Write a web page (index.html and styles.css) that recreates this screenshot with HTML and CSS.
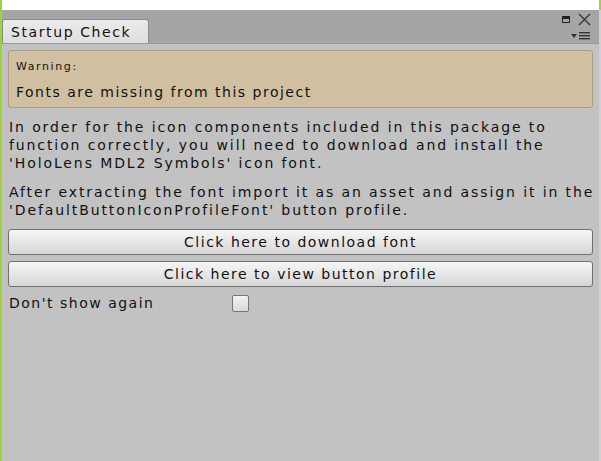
FILE: index.html
```html
<!DOCTYPE html>
<html>

<head>
    <link rel="stylesheet" href="styles.css">
</head>

<body>
    <div class="topstrip"></div>
    <div class="window">
        <div class="tabbar">
            <div class="tab">Startup Check</div>
            <div class="controls">
                <div class="ctl-row">
                    <svg width="9" height="8" viewBox="0 0 9 8">
                        <rect x="0.5" y="0.5" width="7" height="6" fill="none" stroke="#222" />
                        <rect x="1" y="1" width="6" height="2" fill="#222" />
                    </svg>
                    <svg width="13" height="13" viewBox="0 0 13 13">
                        <path d="M1 1 L12 12 M12 1 L1 12" stroke="#333" stroke-width="1.3" fill="none" />
                    </svg>
                </div>
                <div class="ctl-menu">
                    <svg width="20" height="8" viewBox="0 0 20 8">
                        <path d="M0 2 L6 2 L3 6 Z" fill="#333" />
                        <rect x="8" y="0" width="11" height="1.4" fill="#333" />
                        <rect x="8" y="3" width="11" height="1.4" fill="#333" />
                        <rect x="8" y="6" width="11" height="1.4" fill="#333" />
                    </svg>
                </div>
            </div>
        </div>

        <div class="content">
            <div class="helpbox">
                <div class="help-title">Warning:</div>
                <div class="help-text">Fonts are missing from this project</div>
            </div>

            <p>In order for the icon components included in this package to<br>
                function correctly, you will need to download and install the<br>
                'HoloLens MDL2 Symbols' icon font.</p>
            <p>After extracting the font import it as an asset and assign it in the<br>
                'DefaultButtonIconProfileFont' button profile.</p>

            <div class="btn first">Click here to download font</div>
            <div class="btn">Click here to view button profile</div>

            <div class="toggle">
                <span class="toggle-label">Don't show again</span>
                <span class="checkbox"></span>
            </div>
        </div>
    </div>
</body>

</html>
```

FILE: styles.css
```css
html,
body {
    margin: 0;
    height: 100%;
}

body {
    font-family: "DejaVu Sans", sans-serif;
    color: #111;
    background: #c2c2c2;
    border-left: 2px solid #9fd33a;
    box-sizing: border-box;
    display: flex;
    flex-direction: column;
    overflow: hidden;
}

.topstrip {
    height: 10px;
    background: #fff;
    border-right: 2px solid #9fd33a;
    flex: none;
}

.window {
    flex: 1;
    display: flex;
    flex-direction: column;
    border-right: 2px solid #d0d0d0;
}

.tabbar {
    background: #a5a5a5;
    height: 33px;
    display: flex;
    align-items: flex-end;
    justify-content: space-between;
    border-bottom: 1px solid #999;
    flex: none;
}

.tab {
    width: 137px;
    height: 23px;
    padding-left: 8px;
    background: linear-gradient(#ebebeb, #dedede);
    border: 1px solid #8a8a8a;
    border-bottom: none;
    border-radius: 3px 3px 0 0;
    font-size: 14px;
    letter-spacing: 1.6px;
    line-height: 24px;
    color: #111;
}

.controls {
    align-self: stretch;
    display: flex;
    flex-direction: column;
    align-items: flex-end;
    padding: 3px 8px 0 0;
}

.ctl-row {
    display: flex;
    align-items: center;
    gap: 7px;
}

.ctl-menu {
    margin-top: 6px;
    line-height: 0;
}

.content {
    padding: 6px 6px 0 6px;
}

.helpbox {
    background: #d1bfa1;
    border: 1px solid #a89c86;
    border-radius: 3px;
    padding: 8px 7px 4px 7px;
}

.help-title {
    font-size: 11px;
    letter-spacing: 1.6px;
    line-height: 16px;
}

.help-text {
    margin-top: 6px;
    font-size: 14px;
    letter-spacing: 1.5px;
    line-height: 22px;
}

p {
    margin: 10px 0 0 1px;
    font-size: 14px;
    letter-spacing: 1.9px;
    line-height: 18px;
    white-space: nowrap;
}

p + p {
    margin-top: 11px;
}

.btn {
    margin-top: 6px;
    height: 24px;
    border: 1px solid #707070;
    border-radius: 3px;
    background: linear-gradient(#f6f6f6, #d6d6d6);
    text-align: center;
    font-size: 14px;
    letter-spacing: 1.5px;
    line-height: 24px;
}

.btn.first {
    margin-top: 10px;
}

.toggle {
    display: flex;
    align-items: center;
    margin-top: 6px;
    padding-left: 1px;
    font-size: 14px;
    letter-spacing: 1.5px;
    height: 20px;
}

.toggle-label {
    width: 223px;
}

.checkbox {
    width: 15px;
    height: 15px;
    border: 1px solid #777;
    border-radius: 2px;
    background: linear-gradient(#f3f3f3, #d8d8d8);
}
```
